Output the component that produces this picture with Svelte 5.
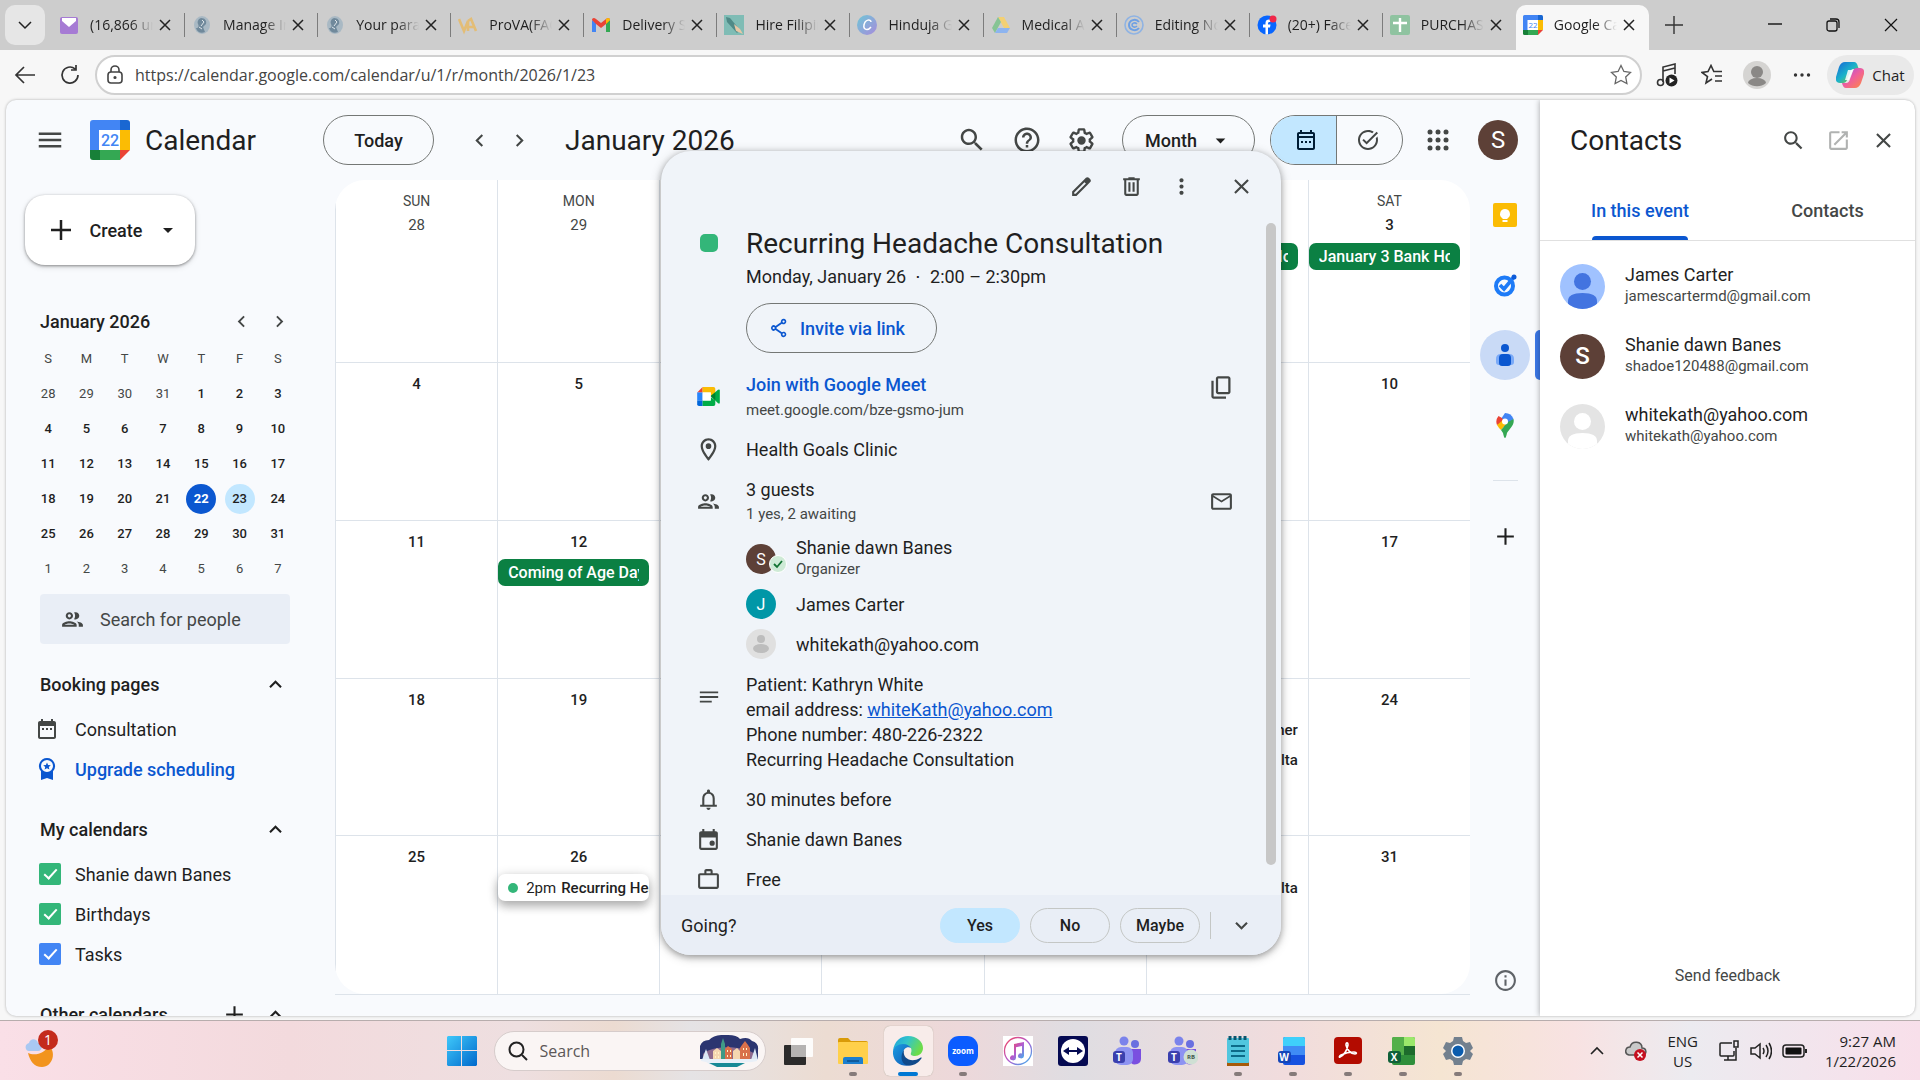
<script>
  const tabs = [
    { title: '(16,866 unread)', icon: 'mail' },
    { title: 'Manage Invoices', icon: 'globe' },
    { title: 'Your paragraph', icon: 'globe' },
    { title: 'ProVA(FACE)', icon: 'va' },
    { title: 'Delivery Status', icon: 'gmail' },
    { title: 'Hire Filipino', icon: 'hire' },
    { title: 'Hinduja Group', icon: 'canva' },
    { title: 'Medical Admin', icon: 'drive' },
    { title: 'Editing Notes', icon: 'circle' },
    { title: '(20+) Facebook', icon: 'facebook' },
    { title: 'PURCHASES', icon: 'sheets' },
    { title: 'Google Calendar', icon: 'calendar', active: true }
  ];

  const favicons = {
    mail: '<rect x="1" y="2" width="18" height="17" rx="2" fill="#a67bd4"/><path d="M3 3h14v3l-7 6-7-6z" fill="#fff"/>',
    globe: '<ellipse cx="10" cy="10" rx="8" ry="9" fill="#a9b9c4"/><path d="M9 3c4 0 6 3 5 6l-3 3 2 5c-4 2-8 0-9-4 3 0 3-2 2-4s0-5 3-6z" fill="#70899b"/><path d="M10 5l2 2-3 4M7 12l3 2" stroke="#dfe6ea" fill="none"/>',
    va: '<path d="M1 4l5 12 4-10v10M10 6l3-2 5 12M11 12h5" fill="none" stroke="#e3bd76" stroke-width="2.6"/>',
    gmail: '<path d="M1 17V5l4 3v9z" fill="#4285f4"/><path d="M15 17V8l4-3v12z" fill="#34a853"/><path d="M1 5c0-2 2-3 4-1l5 4 5-4c2-2 4-1 4 1l-4 4-5 4-5-4z" fill="#ea4335"/><path d="M15 4c2-2 4-1 4 1l-4 4z" fill="#fbbc04"/>',
    hire: '<rect width="20" height="20" fill="#7fbcb5"/><path d="M2 2l4 1 10 12-3 3L3 7z" fill="#4f8a87"/><path d="M10 9l6 5 3 5-7-3z" fill="#e8c7a6"/>',
    canva: '<defs><linearGradient id="fc" y2="1"><stop stop-color="#6fc7d6"/><stop offset="1" stop-color="#a78bdc"/></linearGradient></defs><circle cx="10" cy="10" r="10" fill="url(#fc)"/><path d="M14 7c0-3-6-3-7 3-1 5 4 6 7 2" fill="none" stroke="#fff" stroke-width="1.5"/>',
    drive: '<path d="M7 2h6l6 11h-6z" fill="#f3d074"/><path d="M7 2l3 5-6 11-3-5z" fill="#86c494"/><path d="M7 13h12l-3 5H4z" fill="#8db4ef"/>',
    circle: '<circle cx="10" cy="10" r="9" fill="none" stroke="#8fb3e3" stroke-width="1.6"/><path d="M15 7c-3-4-10-2-10 3s7 7 10 3" fill="none" stroke="#6ea0e4" stroke-width="2"/><path d="M13 9c-2-2-5-1-5 1s3 3 5 1" fill="none" stroke="#6ea0e4" stroke-width="1.6"/>',
    facebook: '<circle cx="10" cy="10" r="9.5" fill="#0866ff"/><path d="M8.5 19.5v-7H6v-3h2.5V8c0-3 2-4 5-3.500v2.500c-2 0-2.500 0-2.500 2.500h2.500l-.5 3h-2v7z" fill="#fff"/><circle cx="16" cy="4" r="3.5" fill="#f02849"/>',
    sheets: '<rect width="20" height="20" rx="2" fill="#8fc3a0"/><path d="M10 3v14M3 8h14" stroke="#fff" stroke-width="2.4"/>'
  };

  const icons = {
    menu: 'M3 18h18v-2H3v2zm0-5h18v-2H3v2zm0-7v2h18V6H3z',
    search: 'M15.5 14h-.79l-.28-.27C15.41 12.59 16 11.11 16 9.5 16 5.91 13.09 3 9.5 3S3 5.91 3 9.5 5.91 16 9.5 16c1.61 0 3.09-.59 4.23-1.57l.27.28v.79l5 4.99L20.49 19l-4.99-5zm-6 0C7.01 14 5 11.99 5 9.5S7.01 5 9.5 5 14 7.01 14 9.5 11.99 14 9.5 14z',
    help: 'M11 18h2v-2h-2v2zm1-16C6.48 2 2 6.48 2 12s4.48 10 10 10 10-4.48 10-10S17.52 2 12 2zm0 18c-4.41 0-8-3.59-8-8s3.59-8 8-8 8 3.59 8 8-3.59 8-8 8zm0-14c-2.21 0-4 1.79-4 4h2c0-1.1.9-2 2-2s2 .9 2 2c0 2-3 1.75-3 5h2c0-2.25 3-2.5 3-5 0-2.21-1.79-4-4-4z',
    settings: 'M13.85 22.25h-3.7c-.74 0-1.36-.54-1.45-1.27l-.27-1.89c-.27-.14-.53-.29-.79-.46l-1.8.72c-.7.26-1.47-.03-1.81-.65L2.2 15.53c-.35-.66-.2-1.44.36-1.88l1.53-1.19c-.01-.15-.02-.3-.02-.46 0-.15.01-.31.02-.46l-1.52-1.19c-.59-.45-.74-1.26-.37-1.88l1.85-3.19c.34-.62 1.11-.9 1.79-.63l1.81.73c.26-.17.52-.32.78-.46l.27-1.91c.09-.7.71-1.25 1.44-1.25h3.7c.74 0 1.36.54 1.45 1.27l.27 1.89c.27.14.53.29.79.46l1.8-.72c.71-.26 1.48.03 1.82.65l1.84 3.18c.36.66.2 1.44-.36 1.88l-1.52 1.19c.01.15.02.3.02.46s-.01.31-.02.46l1.52 1.19c.56.45.72 1.23.37 1.86l-1.86 3.22c-.34.62-1.11.9-1.8.63l-1.8-.72c-.26.17-.52.32-.78.46l-.27 1.91c-.1.68-.72 1.22-1.46 1.22zm-3.23-2h2.76l.37-2.55.53-.22c.44-.18.88-.44 1.34-.78l.45-.34 2.38.96 1.38-2.4-2.03-1.58.07-.56c.03-.26.06-.51.06-.78s-.03-.53-.06-.78l-.07-.56 2.03-1.58-1.39-2.4-2.39.96-.45-.35c-.42-.32-.87-.58-1.33-.77l-.52-.22-.37-2.55h-2.76l-.37 2.55-.53.21c-.44.19-.88.44-1.34.79l-.45.33-2.38-.95-1.39 2.39 2.03 1.58-.07.56a7 7 0 0 0-.06.79c0 .26.02.53.06.78l.07.56-2.03 1.58 1.38 2.4 2.39-.96.45.35c.43.33.86.58 1.33.77l.53.22.38 2.55zM15.5 12a3.5 3.5 0 1 1-7 0 3.5 3.5 0 0 1 7 0z',
    edit: 'M20.41 4.94l-1.35-1.35c-.78-.78-2.05-.78-2.83 0L13.4 6.41 3 16.82V21h4.18l10.46-10.46 2.77-2.77c.79-.78.79-2.05 0-2.83zm-14 14.12L5 19v-1.36l9.82-9.82 1.41 1.41-9.82 9.83z',
    trash: 'M15 4V3H9v1H4v2h1v13c0 1.1.9 2 2 2h10c1.1 0 2-.9 2-2V6h1V4h-5zm2 15H7V6h10v13zM9 8h2v9H9zm4 0h2v9h-2z',
    more: 'M12 8c1.1 0 2-.9 2-2s-.9-2-2-2-2 .9-2 2 .9 2 2 2zm0 2c-1.1 0-2 .9-2 2s.9 2 2 2 2-.9 2-2-.9-2-2-2zm0 6c-1.1 0-2 .9-2 2s.9 2 2 2 2-.9 2-2-.9-2-2-2z',
    close: 'M19 6.41L17.59 5 12 10.59 6.41 5 5 6.41 10.59 12 5 17.59 6.41 19 12 13.41 17.59 19 19 17.59 13.41 12z',
    left: 'M15.41 7.41L14 6l-6 6 6 6 1.41-1.41L10.83 12z',
    right: 'M10 6L8.59 7.41 13.17 12l-4.58 4.59L10 18l6-6z',
    up: 'M12 8l-6 6 1.41 1.41L12 10.83l4.59 4.58L18 14z',
    down: 'M16.59 8.59L12 13.17 7.41 8.59 6 10l6 6 6-6z',
    caret: 'M7 10l5 5 5-5H7z',
    plus: 'M20 13h-7v7h-2v-7H4v-2h7V4h2v7h7v2z',
    people: 'M9 13.75c-2.34 0-7 1.17-7 3.5V19h14v-1.75c0-2.33-4.66-3.5-7-3.5zM4.34 17c.84-.58 2.87-1.25 4.66-1.25s3.82.67 4.66 1.25H4.34zM9 12c1.93 0 3.5-1.57 3.5-3.5S10.93 5 9 5 5.5 6.57 5.5 8.5 7.07 12 9 12zm0-5c.83 0 1.5.67 1.5 1.5S9.83 10 9 10s-1.5-.67-1.5-1.5S8.17 7 9 7zm7.04 6.81c1.16.84 1.96 1.96 1.96 3.44V19h4v-1.75c0-2.02-3.5-3.17-5.96-3.44zM15 12c1.93 0 3.5-1.57 3.5-3.5S16.93 5 15 5c-.54 0-1.04.13-1.5.35.63.89 1 1.98 1 3.15s-.37 2.26-1 3.15c.46.22.96.35 1.5.35z',
    place: 'M12 2C8.13 2 5 5.13 5 9c0 5.25 7 13 7 13s7-7.75 7-13c0-3.87-3.13-7-7-7zM7 9c0-2.76 2.24-5 5-5s5 2.24 5 5c0 2.88-2.88 7.19-5 9.88C9.92 16.21 7 11.85 7 9zM14.5 9a2.5 2.5 0 1 1-5 0 2.5 2.5 0 0 1 5 0z',
    copy: 'M9 18q-.825 0-1.41-.59T7 16V4q0-.825.59-1.41T9 2h9q.825 0 1.41.59T20 4v12q0 .825-.59 1.41T18 18zm0-2h9V4H9zm-4 6q-.825 0-1.41-.59T3 20V6h2v14h11v2z',
    envelope: 'M20 4H4c-1.1 0-2 .9-2 2v12c0 1.1.9 2 2 2h16c1.1 0 2-.9 2-2V6c0-1.1-.9-2-2-2zm0 14H4V8l8 5 8-5v10zm-8-7L4 6h16l-8 5z',
    notes: 'M2 6h20v2H2zM2 11h20v2H2zM2 16h13v2H2z',
    bell: 'M12 22c1.1 0 2-.9 2-2h-4c0 1.1.89 2 2 2zm6-5v-6c0-3.07-1.63-5.64-4.5-6.32V4c0-.83-.67-1.5-1.5-1.5s-1.5.67-1.5 1.5v.68C7.64 5.36 6 7.92 6 11v6H4v2h16v-2h-2zm-2 0H8v-6c0-2.48 1.51-4.5 4-4.5s4 2.02 4 4.5v6z',
    event: 'M19 4h-1V2h-2v2H8V2H6v2H5c-1.1 0-2 .9-2 2v14c0 1.1.9 2 2 2h14c1.1 0 2-.9 2-2V6c0-1.1-.9-2-2-2zm0 16H5V10h14v10zM18 15.5a2.5 2.5 0 1 1-5 0 2.5 2.5 0 0 1 5 0z',
    booking: 'M19 4h-1V2h-2v2H8V2H6v2H5c-1.1 0-2 .9-2 2v14c0 1.1.9 2 2 2h14c1.1 0 2-.9 2-2V6c0-1.1-.9-2-2-2zm0 16H5V9h14v11zM7 11h2v2H7zM11 11h2v2h-2zM15 11h2v2h-2z',
    month: 'M19 4h-1V2h-2v2H8V2H6v2H5c-1.1 0-2 .9-2 2v14c0 1.1.9 2 2 2h14c1.1 0 2-.9 2-2V6c0-1.1-.9-2-2-2zm0 16H5V10h14v10zm0-12H5V6h14v2zM7 13h2v2H7zM11 13h2v2h-2zM15 13h2v2h-2z',
    task: 'M22 5.18L10.59 16.6l-4.24-4.24 1.41-1.41 2.83 2.83 10-10L22 5.18zM19.79 10.22c.13.57.21 1.17.21 1.78 0 4.42-3.58 8-8 8s-8-3.58-8-8 3.58-8 8-8c1.58 0 3.04.46 4.28 1.25l1.44-1.44C16.1 2.67 14.13 2 12 2 6.48 2 2 6.48 2 12s4.48 10 10 10 10-4.48 10-10c0-1.19-.22-2.33-.6-3.39l-1.61 1.61z',
    work: 'M14 6V4h-4v2h4zM4 8v11h16V8H4zm16-2c1.11 0 2 .89 2 2v11c0 1.11-.89 2-2 2H4c-1.11 0-2-.89-2-2l.01-11c0-1.11.88-2 1.99-2h4V4c0-1.11.89-2 2-2h4c1.11 0 2 .89 2 2v2h4z',
    info: 'M11 7h2v2h-2zm0 4h2v6h-2zm1-9C6.48 2 2 6.48 2 12s4.48 10 10 10 10-4.48 10-10S17.52 2 12 2zm0 18c-4.41 0-8-3.59-8-8s3.59-8 8-8 8 3.59 8 8-3.59 8-8 8z',
    share: 'M17 22a3 3 0 0 1-2.94-3.7L8.2 14.3a3 3 0 1 1 0-4.6l5.86-4a3 3 0 1 1 1.1 1.7l-5.9 4a3 3 0 0 1 0 1.2l5.9 4A3 3 0 1 1 17 22zm0-1.8a1.2 1.2 0 1 0 0-2.4 1.2 1.2 0 0 0 0 2.4zM6.2 13.2a1.2 1.2 0 1 0 0-2.4 1.2 1.2 0 0 0 0 2.4zM17 6.2a1.2 1.2 0 1 0 0-2.4 1.2 1.2 0 0 0 0 2.4z',
    popout: 'M5 21q-.8 0-1.4-.6T3 19V5q0-.8.6-1.4T5 3h8v2H5v14h14v-8h2v8q0 .8-.6 1.400T19 21zM8.7 16.7l-1.4-1.4L17.6 5H15V3h6v6h-2V6.4z',
    badge: 'M12 1a8 8 0 0 0-6 13.3V23l6-2 6 2v-8.7A8 8 0 0 0 12 1zm0 2a6 6 0 1 1 0 12 6 6 0 0 1 0-12zm0 2.5l-1.1 2.5-2.7.2 2 1.800-.6 2.600 2.400-1.400 2.400 1.400-.6-2.600 2-1.800-2.700-.2z'
  };

  const weekdays = ['S', 'M', 'T', 'W', 'T', 'F', 'S'];
  const weeks = [
    [28, 29, 30, 31, 1, 2, 3],
    [4, 5, 6, 7, 8, 9, 10],
    [11, 12, 13, 14, 15, 16, 17],
    [18, 19, 20, 21, 22, 23, 24],
    [25, 26, 27, 28, 29, 30, 31],
    [1, 2, 3, 4, 5, 6, 7]
  ];
  const isOutside = (week, day) => (week === 0 && day > 20) || week === 5;

  // the open event card lies over Tuesday to Friday, so those headings are left out
  const dayNames = { 0: 'SUN', 1: 'MON', 6: 'SAT' };
  const events = {
    '0-5': [{ title: 'January 2 Bank Holiday', kind: 'holiday' }],
    '0-6': [{ title: 'January 3 Bank Holiday', kind: 'holiday' }],
    '2-1': [{ title: 'Coming of Age Day', kind: 'holiday' }],
    '3-5': [{ title: 'ner', kind: 'tail' }, { title: 'lta', kind: 'tail' }],
    '4-1': [{ time: '2pm', title: 'Recurring Headache', kind: 'open' }],
    '4-5': [{ title: 'lta', kind: 'tail' }]
  };

  const calendars = [
    { name: 'Shanie dawn Banes', color: 'green' },
    { name: 'Birthdays', color: 'green' },
    { name: 'Tasks', color: 'blue' }
  ];

  const contacts = [
    { name: 'James Carter', email: 'jamescartermd@gmail.com', avatar: 'blue' },
    { name: 'Shanie dawn Banes', email: 'shadoe120488@gmail.com', avatar: 'letter' },
    { name: 'whitekath@yahoo.com', email: 'whitekath@yahoo.com', avatar: 'grey' }
  ];

  const teams = '<circle cx="11" cy="5" r="4.5" fill="#7b83eb"/><circle cx="22" cy="8" r="4" fill="#6a6fe0"/><path d="M18 13h10v10a6 6 0 0 1-10 4z" fill="#7a4fe0"/><rect x="2" y="11" width="18" height="18" rx="6" fill="#8d93f2"/><rect x="0" y="15" width="12" height="12" rx="3" fill="#3a3fae"/><text x="6" y="25" text-anchor="middle" font-family="Open Sans, sans-serif" font-size="10" font-weight="700" fill="#fff">T</text>';
  const apps = [
    { name: 'Task view', svg: '<rect x="1" y="9" width="22" height="20" rx="1" fill="#2b2b2b"/><rect x="8" y="2" width="22" height="19" rx="1" fill="#fff" opacity=".9"/><path d="M8 9h15v12H8z" fill="#b5b3b2"/>' },
    { name: 'File Explorer', running: true, svg: '<path d="M0 4q0-2 2-2h8l3 3h15q2 0 2 2v6H0z" fill="#d99b08"/><rect y="6" width="30" height="22" rx="1" fill="#ffd04a"/><path d="M5 28v-5q0-2 2-2h16q2 0 2 2v5z" fill="#1b7fcf"/><path d="M9 25h12" stroke="#0b4f8c" stroke-width="1.5"/>' },
    { name: 'Edge', active: true, svg: '<defs><linearGradient id="eg" x1="0" y1="0" x2="1" y2=".4"><stop stop-color="#1a9fe0"/><stop offset=".5" stop-color="#33c5c9"/><stop offset="1" stop-color="#6ddc4a"/></linearGradient><linearGradient id="eb" y2="1"><stop stop-color="#1b9de2"/><stop offset="1" stop-color="#1058b5"/></linearGradient></defs><path d="M0 15C1 5 8 0 15 0c9 0 15 6 15 12 0 5-4 8-8 8-3 0-5-1-4-3 2-5-2-8-6-8-6 0-11 3-12 6z" fill="url(#eg)"/><path d="M0 15c1-4 5-7 10-7 4 0 7 2 8 4-4-2-8 1-8 6 0 6 4 10 8 11-9 3-19-3-18-14z" fill="url(#eb)"/><path d="M11 14c-2 9 8 13 16 8 2-1 2 0 1 1-5 7-12 7-15 6-5-2-6-10-2-15z" fill="#114a8b"/>' },
    { name: 'Zoom', running: true, svg: '<rect width="30" height="30" rx="11" fill="#0b5cff"/><text x="15" y="18" text-anchor="middle" font-family="Open Sans, sans-serif" font-size="8" font-weight="700" fill="#fff">zoom</text>' },
    { name: 'iTunes', svg: '<defs><linearGradient id="it" y2="1"><stop stop-color="#f5455c"/><stop offset=".5" stop-color="#b35bd0"/><stop offset="1" stop-color="#35b8f0"/></linearGradient></defs><path d="M0 0h30v30H0z" fill="#fff"/><circle cx="15" cy="15" r="13.5" fill="none" stroke="url(#it)" stroke-width="1.3"/><path d="M11 8l10-2v14a3 2.500 0 1 1-2-2.500V10l-6 1.200V22a3 2.500 0 1 1-2-2.500z" fill="url(#it)"/>' },
    { name: 'TeamViewer', svg: '<rect width="30" height="30" rx="3" fill="#050a52"/><circle cx="15" cy="15" r="12" fill="#fff"/><path d="M5 15l6-4v3h8v-3l6 4-6 4v-3h-8v3z" fill="#050a52"/>' },
    { name: 'Teams', svg: teams },
    { name: 'Teams RB', svg: teams + '<circle cx="23" cy="21" r="7.5" fill="#cfe0d4"/><text x="23" y="23" text-anchor="middle" font-family="Open Sans, sans-serif" font-size="6" font-weight="700" fill="#41564b">RB</text>' },
    { name: 'Notepad', running: true, svg: '<path d="M4 25h22v5H4z" fill="#a65a0a"/><rect x="4" y="2" width="22" height="25" rx="1" fill="#51c6de"/><path d="M8 10h14M8 15h14M8 20h14" stroke="#0c6b88" stroke-width="2"/><path d="M7 0v4M12 0v4M17 0v4M22 0v4" stroke="#0c566e" stroke-width="3"/>' },
    { name: 'Word', running: true, svg: '<rect x="5" y="1" width="22" height="28" rx="2" fill="#1652e0"/><path d="M5 10h22v9H5z" fill="#3f8cf5"/><path d="M7 1h18q2 0 2 2v7H5V3q0-2 2-2z" fill="#3fd0fb"/><rect x="0" y="15" width="13" height="12" rx="3" fill="#1446b8"/><text x="6" y="25" text-anchor="middle" font-family="Open Sans, sans-serif" font-size="10" font-weight="700" fill="#fff">W</text>' },
    { name: 'Acrobat', running: true, svg: '<rect x="1" y="1" width="28" height="27" rx="4" fill="#b30b00"/><path d="M7 21c4-2 7-7 8-12 0-3-2-3-2 0 1 5 5 9 9 9 2 0 2-2-1-2-5 0-9 1-13 3-2 1-2 3-1 2z" fill="none" stroke="#fff" stroke-width="1.6"/>' },
    { name: 'Excel', running: true, svg: '<rect x="4" y="1" width="23" height="28" rx="2" fill="#2f8f3b"/><path d="M4 10h23v9H4z" fill="#1d6b2c"/><path d="M6 1h10v18H4V3q0-2 2-2z" fill="#54b04a"/><path d="M16 1h9q2 0 2 2v7H16z" fill="#9be86b"/><rect x="0" y="15" width="13" height="12" rx="3" fill="#0f6038"/><text x="6" y="25" text-anchor="middle" font-family="Open Sans, sans-serif" font-size="10" font-weight="700" fill="#fff">X</text>' },
    { name: 'Settings', running: true, svg: '<path d="M11 1h8l1 4 3 2 4-1 3 6-3 3 3 3-3 6-4-1-3 2-1 4h-8l-1-4-3-2-4 1-3-6 3-3-3-3 3-6 4 1 3-2z" fill="#72808e"/><circle cx="15" cy="15" r="7" fill="#fff"/><circle cx="15" cy="15" r="5.5" fill="#0b5cad"/>' }
  ];
</script>

{#snippet icon(name, size = 25)}
  <svg width={size} height={size} viewBox="0 0 24 24" fill="currentColor" aria-hidden="true"><path d={icons[name]} /></svg>
{/snippet}

{#snippet calendarLogo(size)}
  <svg width={size} height={size} viewBox="0 0 40 40" aria-hidden="true">
    <path d="M3 0h28v10H10v20H0V3q0-3 3-3z" fill="#4285f4" />
    <path d="M30 0h7q3 0 3 3v7H30z" fill="#1967d2" />
    <path d="M30 10h10v20H30z" fill="#fbbc04" />
    <path d="M0 30h10v10H3q-3 0-3-3z" fill="#188038" />
    <path d="M10 30h20v10H10z" fill="#34a853" />
    <path d="M30 30h10L30 40z" fill="#ea4335" />
    <path d="M9 10h21v20H9z" fill="#fff" />
    <text x="20" y="26" text-anchor="middle" font-size="16" font-weight="500" fill="#4285f4">22</text>
  </svg>
{/snippet}

<div class="screen">
  <header class="tabstrip">
    <button class="tab-menu" aria-label="Tab actions">
      <svg width="16" height="16" viewBox="0 0 16 16"><path d="M2 5l6 6 6-6" fill="none" stroke="#222" stroke-width="1.5" /></svg>
    </button>
    <div class="tabs">
      {#each tabs as tab}
        <div class="tab" class:active={tab.active}>
          {#if tab.icon === 'calendar'}
            {@render calendarLogo(20)}
          {:else}
            <svg width="20" height="20" viewBox="0 0 20 20">{@html favicons[tab.icon]}</svg>
          {/if}
          <span class="tab-title">{tab.title}</span>
          <button class="tab-close" aria-label="Close tab">
            <svg width="12" height="12" viewBox="0 0 12 12"><path d="M1 1l10 10M11 1L1 11" stroke="#222" stroke-width="1.5" /></svg>
          </button>
        </div>
      {/each}
    </div>
    <div class="window-buttons">
      <button aria-label="New tab"><svg width="20" height="20" viewBox="0 0 20 20"><path d="M10 1v18M1 10h18" stroke="#333" stroke-width="1.4" /></svg></button>
      <span class="spacer"></span>
      <button aria-label="Minimize"><svg width="14" height="14" viewBox="0 0 14 14"><path d="M0 6h14" stroke="#111" stroke-width="1.4" /></svg></button>
      <button aria-label="Restore"><svg width="14" height="14" viewBox="0 0 14 14" fill="none" stroke="#111" stroke-width="1.3"><rect x="1" y="3" width="10" height="10" rx="2" /><path d="M4 1h6q3 0 3 3v6" /></svg></button>
      <button aria-label="Close"><svg width="14" height="14" viewBox="0 0 14 14"><path d="M1 1l12 12M13 1L1 13" stroke="#111" stroke-width="1.2" /></svg></button>
    </div>
  </header>

  <div class="toolbar">
    <button class="nav" aria-label="Back"><svg width="22" height="22" viewBox="0 0 22 22" fill="none" stroke="#333" stroke-width="1.7"><path d="M21 11H2M10 3l-8 8 8 8" /></svg></button>
    <button class="nav" aria-label="Reload"><svg width="20" height="20" viewBox="0 0 20 20" fill="none" stroke="#333" stroke-width="1.7"><path d="M18 10a8 8 0 1 1-3-6.2M16 0v5h-5" /></svg></button>
    <label class="address">
      <svg width="18" height="20" viewBox="0 0 18 20" fill="none" stroke="#444" stroke-width="1.6"><rect x="2" y="7" width="14" height="11" rx="3" /><path d="M5 7V5a4 4 0 0 1 8 0v2" /><circle cx="9" cy="12.5" r=".8" fill="#444" /></svg>
      <input type="text" value="https://calendar.google.com/calendar/u/1/r/month/2026/1/23" aria-label="Address" />
      <svg width="22" height="22" viewBox="0 0 22 22" fill="none" stroke="#666" stroke-width="1.3"><path d="M11 1.5l2.9 6 6.6.9-4.8 4.6 1.2 6.5-5.9-3.1-5.9 3.1 1.2-6.5L1.5 8.4l6.600-.9z" /></svg>
    </label>
    <button class="tool" aria-label="Media"><svg width="22" height="24" viewBox="0 0 22 24"><path d="M7 19V4l12-3v10M7 8l12-3" fill="none" stroke="#333" stroke-width="1.6" /><circle cx="4.5" cy="19.5" r="3" fill="none" stroke="#333" stroke-width="1.6" /><circle cx="15.5" cy="17.5" r="6" fill="#222" /><path d="M13.5 14.5v6l5-3z" fill="#fff" /></svg></button>
    <button class="tool" aria-label="Favorites"><svg width="22" height="22" viewBox="0 0 22 22" fill="none" stroke="#333" stroke-width="1.6"><path d="M11 15l-6 4 1.500-6.500L1 8.400l6-.9 3-6 2.800 6H21M14 12h7M14 17h7" /></svg></button>
    <button class="tool" aria-label="Profile"><svg width="28" height="28" viewBox="0 0 28 28"><circle cx="14" cy="14" r="14" fill="#d5d4d2" /><circle cx="14" cy="11" r="6" fill="#8a8886" /><path d="M5 22a9 5 0 0 1 18 0 14 14 0 0 1-18 0z" fill="#8a8886" /></svg></button>
    <button class="tool" aria-label="More"><svg width="18" height="6" viewBox="0 0 18 6" fill="#333"><circle cx="2.500" cy="3" r="1.7" /><circle cx="9" cy="3" r="1.7" /><circle cx="15.5" cy="3" r="1.7" /></svg></button>
    <button class="chat">
      <svg width="28" height="28" viewBox="0 0 28 28">
        <defs>
          <linearGradient id="cpa" y2="1"><stop stop-color="#1663d8" /><stop offset=".5" stop-color="#1bb4c9" /><stop offset=".8" stop-color="#7cc242" /><stop offset="1" stop-color="#f5c51c" /></linearGradient>
          <linearGradient id="cpb" y2="1"><stop stop-color="#9a4ff0" /><stop offset=".5" stop-color="#ef5f9c" /><stop offset="1" stop-color="#ff8b3d" /></linearGradient>
        </defs>
        <path d="M9 1h9q3 0 4 5l1 2h-6q-2 0-3 4l-3 7q-1 3-4 3H4q-5 0-4-6L3 6q2-5 6-5z" fill="url(#cpa)" />
        <path d="M19 27h-9q-3 0-4-5h4q3 0 4-4l3-8q1-3 4-3h3q5 0 4 6l-3 9q-2 5-6 5z" fill="url(#cpb)" />
        <path d="M12 9h5l-4 10h-4z" fill="#fff" opacity=".85" />
      </svg>
      Chat
    </button>
  </div>

  <main class="page">
    <div class="calendar-app">
      <header class="top">
        <button class="icon-btn" aria-label="Main menu">{@render icon('menu', 30)}</button>
        <div class="brand">{@render calendarLogo(40)}<span>Calendar</span></div>
        <button class="pill today">Today</button>
        <button class="arrow" aria-label="Previous month">{@render icon('left')}</button>
        <button class="arrow" aria-label="Next month">{@render icon('right')}</button>
        <h1>January 2026</h1>
        <div class="top-tools">
          <button aria-label="Search">{@render icon('search', 30)}</button>
          <button aria-label="Support">{@render icon('help', 30)}</button>
          <button aria-label="Settings">{@render icon('settings', 29)}</button>
        </div>
        <div class="pill month">
          <select aria-label="View"><option>Month</option></select>
          {@render icon('caret', 23)}
        </div>
        <div class="toggle">
          <button class="on" aria-label="Calendar">{@render icon('month', 24)}</button>
          <button aria-label="Tasks">{@render icon('task', 24)}</button>
        </div>
        <button class="apps" aria-label="Google apps">
          <svg width="22" height="22" viewBox="0 0 22 22" fill="#444746">
            {#each [3, 11, 19] as y}{#each [3, 11, 19] as x}<circle cx={x} cy={y} r="2.5" />{/each}{/each}
          </svg>
        </button>
        <span class="avatar me">S</span>
      </header>

      <div class="body">
        <aside class="sidebar">
          <button class="create">{@render icon('plus', 30)}<span>Create</span>{@render icon('caret', 24)}</button>

          <div class="mini-head">
            <h2>January 2026</h2>
            <button aria-label="Previous">{@render icon('left', 23)}</button>
            <button aria-label="Next">{@render icon('right', 23)}</button>
          </div>
          <table class="mini">
            <thead>
              <tr>{#each weekdays as d}<th>{d}</th>{/each}</tr>
            </thead>
            <tbody>
              {#each weeks as week, w}
                <tr>
                  {#each week as day}
                    <td class:outside={isOutside(w, day)}>
                      <span class:today-dot={w === 3 && day === 22} class:picked={w === 3 && day === 23}>{day}</span>
                    </td>
                  {/each}
                </tr>
              {/each}
            </tbody>
          </table>

          <label class="people">
            {@render icon('people')}
            <input type="text" placeholder="Search for people" />
          </label>

          <section>
            <div class="side-head"><h3>Booking pages</h3>{@render icon('up')}</div>
            <div class="side-row">{@render icon('booking', 24)}<span>Consultation</span></div>
            <a class="side-row upgrade" href="#upgrade">{@render icon('badge', 24)}<span>Upgrade scheduling</span></a>
          </section>
          <section>
            <div class="side-head"><h3>My calendars</h3>{@render icon('up')}</div>
            {#each calendars as cal}
              <label class="side-row check"><input type="checkbox" class={cal.color} checked /><span>{cal.name}</span></label>
            {/each}
          </section>
          <section>
            <div class="side-head"><h3>Other calendars</h3>{@render icon('plus')}{@render icon('up')}</div>
          </section>
        </aside>

        <div class="grid-wrap">
          <div class="month-grid">
            {#each weeks.slice(0, 5) as week, w}
              {#each week as day, d}
                <div class="cell" class:first={w === 0}>
                  {#if w === 0}<div class="day-name">{dayNames[d] ?? ''}</div>{/if}
                  <div class="day-num" class:outside={isOutside(w, day)}>{dayNames[d] ? day : ''}</div>
                  <div class="events">
                    {#each events[`${w}-${d}`] ?? [] as ev}
                      <div class="event {ev.kind}">
                        {#if ev.time}<i class="dot"></i><span class="time">{ev.time}</span>{/if}
                        <span class="event-title">{ev.title}</span>
                      </div>
                    {/each}
                  </div>
                </div>
              {/each}
            {/each}
          </div>
        </div>

        <nav class="rail" aria-label="Side panel">
          <a href="#keep" aria-label="Keep"><svg width="24" height="24" viewBox="0 0 24 24"><rect width="24" height="24" rx="2" fill="#fbbc04" /><path d="M12 6a5 5 0 0 0-2.500 9.300V16h5v-.7A5 5 0 0 0 12 6z" fill="#fff" /><path d="M9.500 17h5v2h-5z" fill="#fff" /></svg></a>
          <a href="#tasks" aria-label="Tasks"><svg width="24" height="24" viewBox="0 0 24 24"><circle cx="11.500" cy="13" r="8.500" fill="none" stroke="#1e7bf7" stroke-width="4" /><path d="M7 12l4 4L21 4" fill="none" stroke="#1e7bf7" stroke-width="3.600" /><circle cx="21" cy="4" r="2.500" fill="#0d5bd8" /></svg></a>
          <a href="#contacts" class="current" aria-label="Contacts"><svg width="18" height="22" viewBox="0 0 18 22"><circle cx="9" cy="4" r="4" fill="#0b57d0" /><path d="M0 15q0-5 5-5h8q5 0 5 5v3q0 3-3 3H3q-3 0-3-3z" fill="#7baaf7" /><path d="M3 14q0-4 4-4h4q4 0 4 4v5q0 3-3 3H6q-3 0-3-3z" fill="#0b57d0" /></svg></a>
          <a href="#maps" aria-label="Maps"><svg width="18" height="25" viewBox="0 0 18 25"><path d="M9 0a9 9 0 0 1 8.500 6L9 15 3 9z" fill="#4285f4" /><path d="M2.500 3A9 9 0 0 0 1 12l8-3-3-4z" fill="#ea4335" /><path d="M1 12a20 20 0 0 0 4 5l7-8-5-2z" fill="#fbbc04" /><path d="M17.500 6C19 12 13 16 11 20q-1 5-2 5t-2-5l-2-3 7-8z" fill="#34a853" /><circle cx="9" cy="8.500" r="3" fill="#fff" /></svg></a>
          <hr />
          <button aria-label="Get add-ons">{@render icon('plus', 25)}</button>
          <button class="hide" aria-label="Information">{@render icon('info', 25)}</button>
        </nav>
      </div>

      <div class="popup" role="dialog" aria-label="Event details">
        <div class="popup-tools">
          <button aria-label="Edit event">{@render icon('edit')}</button>
          <button aria-label="Delete event">{@render icon('trash')}</button>
          <button aria-label="Options">{@render icon('more')}</button>
          <button class="popup-close" aria-label="Close">{@render icon('close')}</button>
        </div>
        <div class="popup-body">
          <div class="row title-row">
            <i class="swatch"></i>
            <div>
              <h2>Recurring Headache Consultation</h2>
              <p>Monday, January 26 &nbsp;⋅&nbsp; 2:00 – 2:30pm</p>
              <button class="pill invite">{@render icon('share', 22)}Invite via link</button>
            </div>
          </div>
          <div class="row meet">
            <svg width="23" height="19" viewBox="0 0 25 21"><path d="M6 0v6H0z" fill="#ea4335" /><path d="M6 0h12q2 0 2 2v5l-5 4V6H6z" fill="#fbbc04" /><path d="M0 6h6v9H0z" fill="#2684fc" /><path d="M0 15h6v6H2q-2 0-2-2z" fill="#0066da" /><path d="M6 15h9v-4l5 4v4q0 2-2 2H6z" fill="#00ac47" /><path d="M6 6h9v9H6z" fill="#fff" /><path d="M15 10l8-7q2-1 2 1v13q0 2-2 1z" fill="#00ac47" /><path d="M15 10l5-4v9z" fill="#00832d" /></svg>
            <div>
              <a class="join" href="#meet">Join with Google Meet</a>
              <small>meet.google.com/bze-gsmo-jum</small>
            </div>
            <button class="side-action copy" aria-label="Copy link">{@render icon('copy', 27)}</button>
          </div>
          <div class="row single">{@render icon('place', 27)}<span>Health Goals Clinic</span></div>
          <div class="row guests">
            {@render icon('people')}
            <div>
              <p>3 guests</p>
              <small>1 yes, 2 awaiting</small>
            </div>
            <button class="side-action" aria-label="Email guests">{@render icon('envelope')}</button>
          </div>
          <ul class="guest-list">
            <li class="organizer">
              <span class="avatar small">S<svg class="tick" width="18" height="18" viewBox="0 0 18 18"><circle cx="9" cy="9" r="8.5" fill="#ceead6" stroke="#fff" /><path d="M5 9l3 3 5-6" fill="none" stroke="#137333" stroke-width="1.8" /></svg></span>
              <div>Shanie dawn Banes<small>Organizer</small></div>
            </li>
            <li><span class="avatar small teal">J</span>James Carter</li>
            <li>
              <svg width="30" height="30" viewBox="0 0 30 30"><circle cx="15" cy="15" r="15" fill="#e0e0e0" /><circle cx="15" cy="10" r="4" fill="#bdbdbd" /><ellipse cx="15" cy="19.5" rx="8" ry="4.5" fill="#bdbdbd" /></svg>
              whitekath@yahoo.com
            </li>
          </ul>
          <div class="row notes">
            {@render icon('notes', 22)}
            <p>Patient: Kathryn White<br />email address: <a href="#mail">whiteKath@yahoo.com</a><br />Phone number: 480-226-2322<br />Recurring Headache Consultation</p>
          </div>
          <div class="row single">{@render icon('bell')}<span>30 minutes before</span></div>
          <div class="row single">{@render icon('event')}<span>Shanie dawn Banes</span></div>
          <div class="row single">{@render icon('work')}<span>Free</span></div>
        </div>
        <i class="scrollbar"></i>
        <footer>
          <span>Going?</span>
          <button class="rsvp yes">Yes</button>
          <button class="rsvp">No</button>
          <button class="rsvp">Maybe</button>
          <button class="rsvp-more" aria-label="More options">{@render icon('down')}</button>
        </footer>
      </div>
    </div>

    <aside class="contacts">
      <header>
        <h2>Contacts</h2>
        <button aria-label="Search contacts">{@render icon('search')}</button>
        <button class="dim" aria-label="Open in new tab">{@render icon('popout')}</button>
        <button aria-label="Close">{@render icon('close')}</button>
      </header>
      <div class="panel-tabs">
        <button class="selected">In this event</button>
        <button>Contacts</button>
      </div>
      <ul>
        {#each contacts as person}
          <li>
            {#if person.avatar === 'letter'}
              <span class="avatar large">S</span>
            {:else}
              <svg class={person.avatar} width="45" height="45" viewBox="0 0 45 45">
                <defs><clipPath id="clip-{person.avatar}"><circle cx="22.5" cy="22.5" r="22.5" /></clipPath></defs>
                <g clip-path="url(#clip-{person.avatar})"><path class="back" d="M0 0h45v45H0z" /><circle class="fore" cx="22.5" cy="17.5" r="8.5" /><path class="fore" d="M8 45v-8q0-8 14.5-8T37 37v8z" /></g>
              </svg>
            {/if}
            <div>{person.name}<small>{person.email}</small></div>
          </li>
        {/each}
      </ul>
      <button class="feedback">Send feedback</button>
    </aside>
  </main>

  <footer class="taskbar">
    <button class="weather" aria-label="Weather">
      <svg width="38" height="40" viewBox="0 0 38 40"><path d="M5 22c-4 0-5-7 0-8 1-5 8-5 9 0 5 0 5 8 0 8z" fill="#a9c8f2" /><path d="M4 24c6 3 18 1 20-8 9 6 5 22-6 22-8 0-12-6-14-14z" fill="#f2941e" /><circle cx="24" cy="11" r="10" fill="#c42b1c" /><text x="24" y="16" text-anchor="middle" font-size="14" fill="#fff">1</text></svg>
    </button>
    <div class="dock">
      <button class="start" aria-label="Start"><svg width="30" height="30" viewBox="0 0 30 30"><defs><linearGradient id="win" x2="1" y2="1"><stop stop-color="#3fc8fa" /><stop offset="1" stop-color="#0069cc" /></linearGradient></defs><path d="M1 0h13v14H0V1zM15 0h14l1 1v13H15zM0 15h14v15H1l-1-1zM15 15h15v14l-1 1H15z" fill="url(#win)" /></svg></button>
      <label class="search">
        <svg width="20" height="20" viewBox="0 0 20 20" fill="none" stroke="#222" stroke-width="2"><circle cx="8.5" cy="8.5" r="7" /><path d="M14 14l5 5" /></svg>
        <input type="text" placeholder="Search" />
        <svg width="60" height="32" viewBox="0 0 60 32">
          <path d="M1 24V11q2-6 9-6Q16-1 29 0q9 0 12 4 8-3 12 2 7 2 6 9v9z" fill="#2b3570" />
          <path d="M4 19c8-9 40-9 52 0v6H4z" fill="#8d6a8e" />
          <path d="M22 24V9l2-6 2 6v15z" fill="#3f9a86" />
          <path d="M14 24v-8l4-3 4 3v8zM34 24v-8l4-3 3 3v8z" fill="#f4d7b0" />
          <path d="M26 24V14l3-3 4 3v10zM41 24V13l2-3 3-4 3 4 2 3v11z" fill="#d9714a" />
          <path d="M16 17h1v2h-1zM19 17h1v2h-1zM16 21h1v2h-1zM19 21h1v2h-1zM28 15h1v2h-1zM31 15h1v2h-1zM28 20h1v2h-1zM31 20h1v2h-1zM44 13h1v2h-1zM47 13h1v2h-1zM44 18h1v3h-1zM47 18h1v3h-1z" fill="#fff3c8" />
          <path d="M3 25l4-11 4 11zM52 25l4-12 3 12z" fill="#dce8f5" />
          <path d="M2 24h56v2q-8 2-14 1l-5 3H12l-5-3-5-1z" fill="#e9f0f8" />
          <path d="M10 28h36l-8 4H18z" fill="#188a96" />
        </svg>
      </label>
      {#each apps as app}
        <button class="app" class:running={app.running} class:focused={app.active} aria-label={app.name}>
          <svg width="30" height="30" viewBox="0 0 30 30">{@html app.svg}</svg>
        </button>
      {/each}
    </div>
    <div class="tray">
      <svg width="16" height="10" viewBox="0 0 16 10"><path d="M2 8l6-6 6 6" fill="none" stroke="#222" stroke-width="1.6" /></svg>
      <svg class="cloud" width="22" height="24" viewBox="0 0 22 24"><path d="M4 16c-5-1-4-8 1-8 2-7 12-6 12 1 5 0 5 7 1 7z" fill="#c9c9c9" stroke="#555" stroke-width="1.5" /><circle cx="15" cy="16" r="6" fill="#c50f1f" /><path d="M12.5 13.5l5 5M17.5 13.5l-5 5" stroke="#fff" stroke-width="1.5" /></svg>
      <div class="lang">ENG<br />US</div>
      <svg width="22" height="22" viewBox="0 0 22 22" fill="none" stroke="#222" stroke-width="1.5"><path d="M14 3H3q-1 0-1 1v11q0 1 1 1h12q1 0 1-1v-4M6 20h8M10 16v4M18 8v12h-4M16 1h4v6h-4z" /></svg>
      <svg width="22" height="20" viewBox="0 0 22 20" fill="none" stroke="#222" stroke-width="1.5"><path d="M1 7v6h4l5 4V3L5 7zM13 7q2 3 0 6M16 4q4 6 0 12M19 2q5 8 0 16" /></svg>
      <svg class="battery" width="26" height="14" viewBox="0 0 26 14"><rect x="1" y="1" width="21" height="12" rx="3" fill="none" stroke="#222" stroke-width="1.5" /><rect x="3.5" y="3.5" width="16" height="7" rx="1" fill="#111" /><path d="M24 5v4" stroke="#222" stroke-width="2" /></svg>
      <div class="clock">9:27 AM<br />1/22/2026</div>
    </div>
  </footer>
</div>

<style>
  :global(body) {
    margin: 0;
    background: #f7f7f7;
  }

  .screen {
    display: flex;
    flex-direction: column;
    height: 100vh;
    overflow: hidden;
    font-family: Roboto, 'Liberation Sans', sans-serif;
    font-size: 18px;
    color: #1f1f1f;
  }

  button,
  input,
  select {
    font: inherit;
    color: inherit;
    background: none;
    border: none;
    padding: 0;
    margin: 0;
    outline: none;
  }

  button {
    display: flex;
    align-items: center;
    justify-content: center;
  }

  a {
    color: #0b57d0;
    text-decoration: none;
  }

  h1, h2, h3, p, ul {
    margin: 0;
    padding: 0;
    font-weight: 400;
    list-style: none;
  }

  svg {
    flex: none;
    display: block;
  }

  /* browser chrome */
  .tabstrip,
  .toolbar,
  .taskbar {
    font-family: 'Open Sans', 'Noto Sans', sans-serif;
    flex: none;
    align-items: center;
  }

  .tabstrip,
  .toolbar {
    display: flex;
  }

  .tabstrip {
    height: 50px;
    background: #cdcdcd;
  }

  .tab-menu {
    width: 40px;
    height: 40px;
    margin: 0 7px 0 5px;
    border-radius: 10px;
    background: #e6e6e6;
  }

  .tabs {
    flex: 1;
    display: flex;
    align-self: stretch;
    min-width: 0;
  }

  .tab {
    flex: 1;
    min-width: 0;
    display: flex;
    align-items: center;
    margin-top: 5px;
    padding: 0 14px 6px 7px;
    background: linear-gradient(#7c7c7c, #7c7c7c) right 8px / 1px 24px no-repeat;
  }

  .tab.active {
    background: #f7f7f7;
    border-radius: 10px 10px 0 0;
  }

  .tab:nth-last-child(2) {
    background: none;
  }

  .tab-title {
    flex: 1;
    margin: 0 6px 0 11px;
    font-size: 14px;
    white-space: nowrap;
    overflow: hidden;
    mask-image: linear-gradient(to right, #000 65%, transparent);
  }

  .window-buttons {
    width: 271px;
    display: flex;
    align-items: center;
  }

  .window-buttons button {
    width: 58px;
    height: 40px;
  }

  .window-buttons button:first-child {
    width: 50px;
  }

  .spacer {
    flex: 1;
  }

  .toolbar {
    height: 50px;
    background: #f7f7f7;
    padding-right: 6px;
  }

  .nav {
    width: 45px;
    height: 40px;
  }

  .nav:first-child {
    margin-left: 2px;
  }

  .address {
    flex: 1;
    display: flex;
    align-items: center;
    height: 40px;
    box-sizing: border-box;
    margin: 0 2px 0 3px;
    padding: 0 8px 0 9px;
    border: 2px solid #d0d0d0;
    border-radius: 20px;
    background: #fff;
  }

  .address input {
    flex: 1;
    margin: 0 11px;
    font-size: 16px;
    color: #444;
  }

  .tool {
    width: 45px;
    height: 40px;
  }

  .chat {
    gap: 8px;
    width: 87px;
    height: 40px;
    margin-left: 3px;
    border-radius: 20px;
    background: #e9e9e9;
    font-size: 15px;
  }

  /* page */
  .page {
    flex: 1;
    min-height: 0;
    display: flex;
    margin: 0 5px 4px 6px;
    border-radius: 10px;
    overflow: hidden;
    background: #f8fafd;
    box-shadow: 0 0 3px rgba(0, 0, 0, 0.3);
  }

  .calendar-app {
    position: relative;
    flex: 1;
    min-width: 0;
    display: flex;
    flex-direction: column;
  }

  .top {
    flex: none;
    display: flex;
    align-items: center;
    height: 80px;
    box-sizing: border-box;
    padding: 0 22px 0 29px;
    color: #444746;
  }

  .brand {
    display: flex;
    align-items: center;
    gap: 15px;
    width: 233px;
    margin-left: 25px;
    font-size: 28px;
    color: #1f1f1f;
  }

  .pill {
    box-sizing: border-box;
    height: 50px;
    border: 1px solid #747775;
    border-radius: 25px;
    font-size: 18px;
    font-weight: 500;
  }

  .today {
    width: 111px;
    margin-right: 25px;
    color: #1f1f1f;
  }

  .arrow {
    width: 40px;
    height: 40px;
  }

  h1 {
    margin-left: 26px;
    font-size: 28px;
    color: #1f1f1f;
  }

  .top-tools {
    display: flex;
    gap: 25px;
    margin: 0 26px 0 auto;
  }

  .month {
    display: flex;
    align-items: center;
    width: 133px;
    padding-left: 22px;
    color: #1f1f1f;
  }

  .month select {
    appearance: none;
    width: 64px;
    font-size: 18px;
    font-weight: 500;
  }

  .toggle {
    display: flex;
    box-sizing: border-box;
    width: 133px;
    height: 50px;
    margin-left: 15px;
    border: 1px solid #747775;
    border-radius: 25px;
    overflow: hidden;
  }

  .toggle button {
    flex: 1;
    padding-right: 4px;
  }

  .toggle .on {
    padding: 0;
    flex: 0 0 66px;
    box-sizing: border-box;
    padding-left: 4px;
    border-right: 1px solid #747775;
    background: #c2e7ff;
    color: #001d35;
  }

  .apps {
    margin: 0 29px 0 24px;
  }

  .avatar {
    flex: none;
    display: flex;
    align-items: center;
    justify-content: center;
    border-radius: 50%;
    background: #5d4037;
    color: #fff;
  }

  .me {
    width: 40px;
    height: 40px;
    font-size: 24px;
  }

  .body {
    flex: 1;
    min-height: 0;
    display: flex;
  }

  /* left column */
  .sidebar {
    flex: none;
    width: 329px;
    overflow: hidden;
  }

  .create {
    gap: 14px;
    width: 170px;
    height: 70px;
    margin: 15px 0 0 19px;
    padding-left: 6px;
    border-radius: 20px;
    background: #fff;
    box-shadow: 0 1px 3px rgba(0, 0, 0, 0.4), 0 2px 6px rgba(0, 0, 0, 0.12);
    font-size: 18px;
    font-weight: 500;
    box-sizing: border-box;
  }

  .mini-head {
    display: flex;
    align-items: center;
    height: 40px;
    margin: 36px 37px 0 34px;
  }

  .mini-head h2 {
    flex: 1;
    font-size: 18px;
    font-weight: 500;
  }

  .mini-head button {
    width: 38px;
    height: 38px;
    color: #444746;
  }

  .mini {
    width: 268px;
    margin-left: 23px;
    border-collapse: collapse;
    table-layout: fixed;
    font-size: 13px;
    text-align: center;
  }

  .mini th,
  .mini td {
    height: 35px;
    padding: 0;
    font-weight: 500;
  }

  .mini th,
  .mini .outside {
    font-weight: 400;
    color: #444746;
  }

  .mini span {
    display: inline-block;
    width: 30px;
    line-height: 30px;
    border-radius: 50%;
  }

  .mini .today-dot {
    background: #0b57d0;
    color: #fff;
    font-weight: 700;
  }

  .mini .picked {
    background: #c2e7ff;
  }

  .people {
    display: flex;
    align-items: center;
    gap: 15px;
    height: 50px;
    margin: 8px 45px 15px 34px;
    padding-left: 20px;
    border-radius: 4px;
    background: #e9eef6;
    color: #444746;
  }

  .people input {
    flex: 1;
    min-width: 0;
  }

  .people input::placeholder {
    color: #444746;
    opacity: 1;
  }

  section {
    margin-bottom: 15px;
  }

  .side-head {
    display: flex;
    align-items: center;
    gap: 16px;
    height: 50px;
    margin: 0 47px 0 34px;
  }

  .side-head h3 {
    flex: 1;
    font-size: 18px;
    font-weight: 500;
  }

  .side-row {
    display: flex;
    align-items: center;
    gap: 16px;
    height: 40px;
    padding-left: 29px;
  }

  .side-row :global(svg) {
    color: #444746;
  }

  .upgrade {
    font-weight: 500;
  }

  .upgrade :global(svg) {
    color: #0b57d0;
  }

  .check {
    gap: 14px;
    padding-left: 33px;
  }

  .check input {
    appearance: none;
    display: flex;
    justify-content: center;
    width: 22px;
    height: 22px;
    border-radius: 2px;
    background: #33b679;
  }

  .check .blue {
    background: #4285f4;
  }

  .check input::after {
    content: '';
    width: 5px;
    height: 11px;
    margin-top: 3px;
    border: solid #fff;
    border-width: 0 2px 2px 0;
    transform: rotate(42deg);
  }

  /* month grid */
  .grid-wrap {
    flex: 1;
    min-width: 0;
    display: flex;
    margin-bottom: 21px;
    border-bottom: 1px solid #dde3ea;
  }

  .month-grid {
    flex: 1;
    min-width: 0;
    display: grid;
    grid-template-columns: repeat(7, 1fr);
    grid-template-rows: 183px repeat(4, 1fr);
    border-radius: 30px;
    background: #fff;
    overflow: hidden;
  }

  .cell {
    min-width: 0;
    box-sizing: border-box;
    border-left: 1px solid #dde3ea;
    border-bottom: 1px solid #dde3ea;
    text-align: center;
    font-size: 15px;
    font-weight: 500;
    padding-top: 9px;
  }

  .cell:nth-last-child(-n + 7) {
    border-bottom: none;
  }

  .day-name {
    height: 19px;
    margin-top: 3px;
    line-height: 19px;
    font-size: 14px;
    font-weight: 400;
    color: #444746;
  }

  .day-num {
    height: 24px;
    line-height: 24px;
  }

  .first .day-num {
    height: 28px;
    line-height: 28px;
  }

  .day-num.outside {
    color: #444746;
    font-weight: 400;
  }

  .events {
    display: flex;
    flex-direction: column;
    gap: 3px;
    margin-top: 5px;
    padding-right: 10px;
  }

  .first .events {
    margin-top: 4px;
  }

  .event {
    display: flex;
    align-items: center;
    height: 27px;
    box-sizing: border-box;
    padding: 0 10px;
    border-radius: 7px;
    text-align: left;
    white-space: nowrap;
    overflow: hidden;
  }

  .event-title {
    flex: 1;
    overflow: hidden;
  }

  .holiday {
    background: #0b8043;
    color: #fff;
    font-size: 16px;
  }

  .tail {
    padding: 0;
    text-align: right;
  }

  .open {
    padding-right: 0;
    background: #fff;
    box-shadow: 0 6px 10px rgba(0, 0, 0, 0.2), 0 2px 12px rgba(0, 0, 0, 0.2);
  }

  .dot {
    width: 10px;
    height: 10px;
    border-radius: 50%;
    background: #33b679;
  }

  .time {
    margin: 0 5px 0 8px;
    font-weight: 400;
  }

  .rail {
    flex: none;
    display: flex;
    flex-direction: column;
    align-items: center;
    width: 70px;
  }

  .rail a,
  .rail button {
    display: flex;
    align-items: center;
    justify-content: center;
    width: 50px;
    height: 50px;
    margin: 10px 0;
  }

  .rail .current {
    position: relative;
    border-radius: 50%;
    background: #c9daf6;
  }

  .rail .current::after {
    content: '';
    position: absolute;
    left: 55px;
    width: 5px;
    height: 50px;
    border-radius: 5px 0 0 5px;
    background: #3b78e7;
  }

  .rail hr {
    width: 25px;
    height: 1px;
    margin: 20px 0;
    border: none;
    background: #dde3ea;
  }

  .rail .hide {
    margin: auto 0 11px;
    color: #5f6368;
  }

  /* event popup */
  .popup {
    position: absolute;
    top: 51px;
    left: 655px;
    display: flex;
    flex-direction: column;
    width: 620px;
    height: 804px;
    border-radius: 30px;
    background: #f0f4f9;
    box-shadow: 0 2px 6px rgba(0, 0, 0, 0.3), 0 2px 12px rgba(0, 0, 0, 0.2);
    overflow: hidden;
  }

  .popup-tools {
    flex: none;
    display: flex;
    justify-content: flex-end;
    height: 71px;
    margin-bottom: 2px;
    padding-right: 15px;
    color: #444746;
  }

  .popup-tools button {
    width: 50px;
  }

  .popup-tools .popup-close {
    margin-left: 10px;
  }

  .popup-body {
    flex: 1;
    min-height: 0;
    overflow: hidden;
  }

  .row {
    display: grid;
    grid-template-columns: 85px 1fr 120px;
    align-items: center;
  }

  .row > :global(:first-child) {
    justify-self: center;
    margin-left: 10px;
    color: #444746;
  }

  .title-row {
    align-items: start;
    grid-template-columns: 85px 1fr;
  }

  .swatch {
    width: 18px;
    height: 18px;
    margin-top: 10px;
    border-radius: 5px;
    background: #33b679;
  }

  .title-row h2 {
    line-height: 40px;
    font-size: 28px;
  }

  .title-row p {
    line-height: 25px;
  }

  .invite {
    gap: 10px;
    width: 191px;
    margin-top: 14px;
    padding-right: 10px;
    color: #0b57d0;
  }

  .meet {
    height: 55px;
    margin: 16px 0 5px;
  }

  .meet a {
    display: block;
    line-height: 28px;
    font-weight: 500;
  }

  small {
    display: block;
    line-height: 23px;
    font-size: 15px;
    color: #444746;
  }

  .side-action {
    justify-self: center;
    color: #444746;
  }

  .copy {
    align-self: start;
    margin-top: 5px;
  }

  .single {
    height: 40px;
  }

  .guests {
    height: 65px;
  }

  .guests p {
    line-height: 26px;
  }

  .guest-list {
    padding-left: 85px;
  }

  .guest-list li {
    display: flex;
    align-items: center;
    gap: 20px;
    height: 40px;
  }

  .guest-list .organizer {
    height: 50px;
  }

  .small {
    position: relative;
    width: 30px;
    height: 30px;
    font-size: 16px;
  }

  .teal {
    background: #0097a7;
  }

  .tick {
    position: absolute;
    left: 23px;
    top: 11px;
  }

  .notes {
    align-items: start;
    height: 100px;
    margin: 8px 0 7px;
  }

  .notes > :global(svg) {
    margin-top: 14px;
  }

  .notes p {
    line-height: 25px;
  }

  .notes a {
    text-decoration: underline;
  }

  .scrollbar {
    position: absolute;
    top: 72px;
    right: 5px;
    width: 10px;
    height: 642px;
    border-radius: 5px;
    background: #c7c7c7;
  }

  .popup footer {
    flex: none;
    display: flex;
    align-items: center;
    gap: 10px;
    height: 60px;
    padding: 0 10px 0 20px;
    background: #e9eef6;
  }

  .popup footer span {
    flex: 1;
  }

  .rsvp {
    width: 80px;
    height: 35px;
    border: 1px solid #c4c7c5;
    border-radius: 18px;
    font-size: 16px;
    font-weight: 500;
  }

  .rsvp.yes {
    border-color: #c2e7ff;
    background: #c2e7ff;
  }

  .rsvp-more {
    width: 61px;
    height: 27px;
    border-left: 1px solid #c4c7c5;
    color: #444746;
  }

  /* contacts panel */
  .contacts {
    position: relative;
    flex: none;
    display: flex;
    flex-direction: column;
    width: 375px;
    background: #fff;
    box-shadow: 0 0 6px rgba(0, 0, 0, 0.35);
  }

  .contacts header {
    display: flex;
    align-items: center;
    height: 80px;
    padding: 0 9px 0 30px;
    color: #444746;
  }

  .contacts header h2 {
    flex: 1;
    font-size: 28px;
    color: #1f1f1f;
  }

  .contacts header button {
    width: 45px;
    height: 45px;
  }

  .contacts header .dim {
    color: #b0b2b1;
  }

  .panel-tabs {
    display: flex;
    height: 60px;
    border-bottom: 1px solid #e0e0e0;
  }

  .panel-tabs button {
    flex: 1;
    position: relative;
    font-weight: 500;
    color: #444746;
  }

  .panel-tabs .selected {
    flex: 0 0 200px;
    color: #0b57d0;
  }

  .panel-tabs .selected::after {
    content: '';
    position: absolute;
    bottom: 0;
    width: 96px;
    height: 4px;
    border-radius: 4px 4px 0 0;
    background: #0b57d0;
  }

  .contacts ul {
    flex: 1;
    padding: 10px 20px;
  }

  .contacts li {
    display: flex;
    align-items: center;
    gap: 20px;
    height: 70px;
  }

  .large {
    width: 45px;
    height: 45px;
    font-size: 24px;
    font-weight: 500;
  }

  .blue .back {
    fill: #a0c2ff;
  }

  .blue .fore {
    fill: #4374e0;
  }

  .grey .back {
    fill: #e4e4e4;
  }

  .grey .fore {
    fill: #fff;
  }

  .feedback {
    height: 40px;
    margin-bottom: 21px;
    font-size: 16px;
    color: #444746;
  }

  /* taskbar */
  .taskbar {
    display: grid;
    grid-template-columns: 1fr auto 1fr;
    height: 60px;
    box-sizing: border-box;
    border-top: 1px solid #b7adad;
    background: linear-gradient(to right, #fadfe7, #f3dadd 15%, #eedfe0 27%, #ecdbd1 32%, #e5e3e5 36%, #ecdcd2 43%, #edd8da 50%, #dfdde2 56%, #f1dcdd 67%, #f5e5d2 75%, #f8e2e2 82%, #ecebf0 88%, #f8dfea);
    font-size: 15px;
  }

  .weather {
    width: 86px;
    padding-bottom: 4px;
  }

  .dock {
    display: flex;
    align-items: center;
    height: 100%;
    padding-left: 12px;
  }

  .search {
    display: flex;
    align-items: center;
    width: 272px;
    height: 40px;
    box-sizing: border-box;
    margin: 0 5px 0 17px;
    padding: 0 6px 0 13px;
    border: 1px solid #d6cccb;
    border-radius: 20px;
    background: #faf5f4;
  }

  .search input {
    flex: 1;
    min-width: 0;
    margin-left: 12px;
    font-size: 16px;
  }

  .search input::placeholder {
    color: #5c5757;
    opacity: 1;
  }

  .app {
    position: relative;
    width: 49px;
    height: 50px;
    margin: 0 3px;
    border-radius: 6px;
  }

  .focused {
    background: #f8ecea;
    box-shadow: 0 0 1px #998;
  }

  .running::after,
  .focused::after {
    content: '';
    position: absolute;
    bottom: 0;
    width: 8px;
    height: 4px;
    border-radius: 2px;
    background: #857b7a;
  }

  .focused::after {
    width: 20px;
    background: #0078d4;
  }

  .tray {
    display: flex;
    align-items: center;
    justify-content: flex-end;
    gap: 10px;
    padding-right: 24px;
    line-height: 20px;
  }

  .lang {
    margin: 0 10px;
    text-align: center;
  }

  .cloud {
    margin-left: 10px;
  }

  .battery {
    margin-right: 7px;
  }

  .clock {
    text-align: right;
  }
</style>
